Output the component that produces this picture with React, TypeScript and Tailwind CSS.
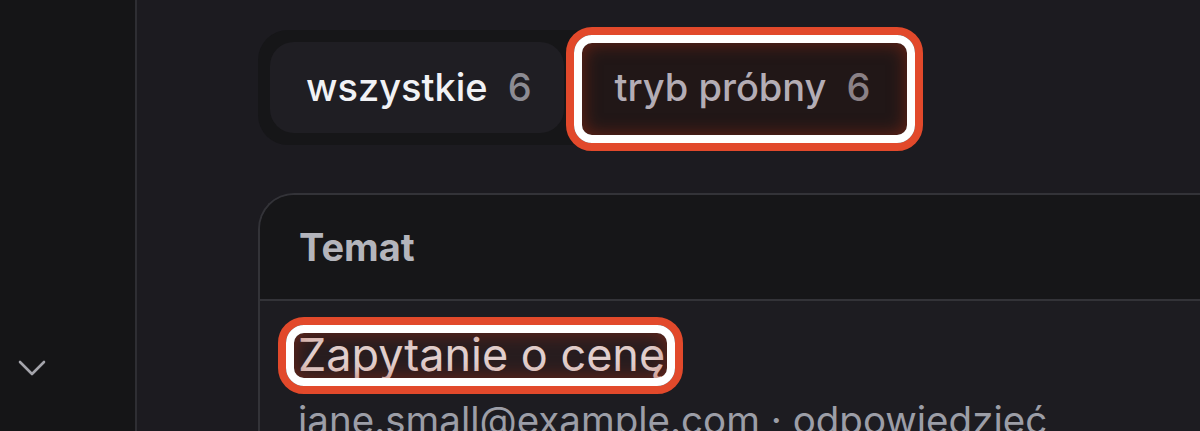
import { ChevronDown } from "lucide-react"
import type { ReactNode } from "react"

// orange + white double ring used to call out an element
function Callout({
  children,
  className = "",
  ring = "-left-[17px] -right-[17px] -top-[15px] -bottom-[18px]",
}: {
  children: ReactNode
  className?: string
  ring?: string
}) {
  return (
    <div className={`relative ${className}`}>
      {children}
      <div className={`pointer-events-none absolute ${ring} rounded-[26px] border-[8px] border-[#e2492b]`}>
        <div className="h-full w-full rounded-[18px] border-[8px] border-white bg-[#8a2410]/10 shadow-[inset_0_0_18px_rgba(170,45,20,0.55)]" />
      </div>
    </div>
  )
}

export default function App() {
  return (
    <div
      className="flex h-[431px] w-[1200px] overflow-hidden bg-[#1c1b20] text-white"
      style={{ fontFamily: "Inter, 'Noto Sans', sans-serif" }}
    >
      {/* Sidebar */}
      <aside className="flex w-[137px] shrink-0 flex-col border-r-2 border-[#2e2e33] bg-[#151517]">
        <div className="mt-[344px] pl-2">
          <ChevronDown size={48} strokeWidth={1.3} className="text-[#a4a4ab]" />
        </div>
      </aside>

      {/* Main */}
      <main className="flex-1 pl-[121px] pt-[30px]">
        <div className="inline-flex gap-[19px] rounded-[30px] bg-[#161618] p-3">
          <button className="flex h-[91px] items-center gap-5 rounded-[24px] bg-[#1f1e23] pl-9 pr-8 text-[38px] font-medium">
            <span className="text-[#f1f2f5]">wszystkie</span>
            <span className="text-[#8c8c93]">6</span>
          </button>
          <Callout>
            <button className="flex h-[91px] items-center gap-5 rounded-[24px] pl-8 pr-9 text-[38px] font-medium">
              <span className="text-[#b9bdc8]">tryb próbny</span>
              <span className="text-[#8c8c93]">6</span>
            </button>
          </Callout>
        </div>

        {/* Table */}
        <div className="mt-[48px] rounded-tl-[36px] border-l-2 border-t-2 border-[#333338]">
          <div className="flex h-[106px] items-center rounded-tl-[34px] border-b-2 border-[#333338] bg-[#161618] pl-[39px]">
            <span className="text-[38px] font-bold text-[#b4b5bc]">Temat</span>
          </div>
          <div className="bg-[#1d1c21] pl-[38px] pt-[29px]">
            <Callout className="inline-block" ring="-left-[20px] -right-[18px] -top-[13px] -bottom-[14px]">
              <div className="text-[45px] leading-[50px] text-[#ece4e4]">Zapytanie o cenę</div>
            </Callout>
            <div className="mt-[18px] whitespace-nowrap text-[38.5px] leading-[44px] text-[#9c9ea7]">
              jane.small@example.com · odpowiedzieć
            </div>
          </div>
        </div>
      </main>
    </div>
  )
}
